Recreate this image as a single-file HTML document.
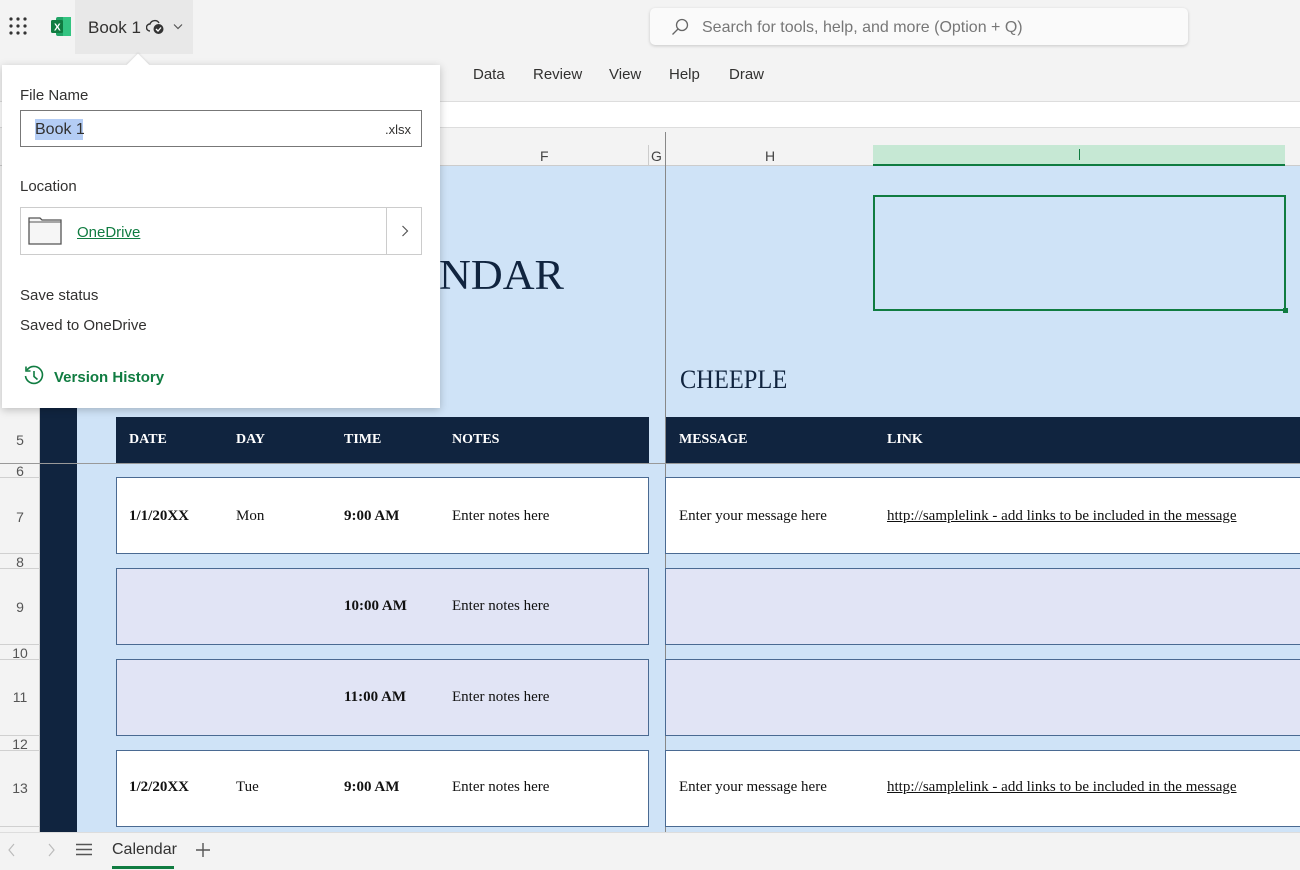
<!DOCTYPE html>
<html><head><meta charset="utf-8"><style>
*{margin:0;padding:0;box-sizing:border-box}
body{width:1300px;height:870px;overflow:hidden;position:relative;background:#cfe3f7;font-family:"Liberation Sans",sans-serif}
.a{position:absolute}
.ui{font-family:"Liberation Sans",sans-serif;color:#323130}
.sr{font-family:"Liberation Serif",serif;color:#111}
.hd{background:#10243f;color:#fff;font-family:"Liberation Serif",serif;font-weight:bold;font-size:14px}
.box{border:1px solid #4a6a92;background:#fff}
.lav{background:#e1e4f5}
.rn{font-size:14px;color:#555;width:40px;text-align:center;left:0}
.rl{left:0;width:40px;height:1px;background:#d0d0d0}
.ct{font-family:"Liberation Serif",serif;font-size:15px;color:#111}
</style></head><body>
<div class="a" style="left:0;top:0;width:1300px;height:101px;background:#f3f3f3"></div>
<div class="a" style="left:0;top:101px;width:1300px;height:27px;background:#fff;border-top:1px solid #ddd;border-bottom:1px solid #ddd"></div>
<div class="a" style="left:0;top:128px;width:1300px;height:38px;background:#f3f3f3;border-bottom:1px solid #ccc"></div>
<svg class="a" style="left:9px;top:17px" width="20" height="20"><g fill="#333"><circle cx="2" cy="2" r="1.6"/><circle cx="9" cy="2" r="1.6"/><circle cx="16" cy="2" r="1.6"/><circle cx="2" cy="9" r="1.6"/><circle cx="9" cy="9" r="1.6"/><circle cx="16" cy="9" r="1.6"/><circle cx="2" cy="16" r="1.6"/><circle cx="9" cy="16" r="1.6"/><circle cx="16" cy="16" r="1.6"/></g></svg>
<svg class="a" style="left:51px;top:17px" width="20" height="19"><rect x="5" y="0" width="15" height="19" rx="2" fill="#21a366"/><rect x="12" y="0" width="8" height="19" fill="#33c481"/><rect x="0" y="3" width="12" height="13" rx="1.5" fill="#107c41"/><text x="3" y="13.5" font-size="10" fill="#fff" font-family="Liberation Sans" font-weight="bold">X</text></svg>
<div class="a" style="left:75px;top:0;width:118px;height:54px;background:#e8e8e8"></div>
<div class="a ui" style="left:88px;top:18px;font-size:17px">Book 1</div>
<svg class="a" style="left:146px;top:18px" width="20" height="18"><path d="M4 13a3.5 3.5 0 0 1 0-7 5 5 0 0 1 9-1" fill="none" stroke="#333" stroke-width="1.4"/><circle cx="12.5" cy="11" r="5" fill="#333"/><path d="M10 11l2 2 3-3.5" stroke="#fff" stroke-width="1.3" fill="none"/></svg>
<svg class="a" style="left:173px;top:23px" width="10" height="8"><path d="M1 1.5l4 4 4-4" fill="none" stroke="#555" stroke-width="1.2"/></svg>
<div class="a" style="left:650px;top:8px;width:538px;height:37px;background:#fafafa;border-radius:5px;box-shadow:0 1px 3px rgba(0,0,0,.18)"></div>
<svg class="a" style="left:671px;top:18px" width="18" height="18"><circle cx="11" cy="7" r="5.5" fill="none" stroke="#666" stroke-width="1.3"/><path d="M7 11l-5.5 5.5" stroke="#666" stroke-width="1.3"/></svg>
<div class="a ui" style="left:702px;top:19px;font-size:16px;color:#777">Search for tools, help, and more (Option + Q)</div>
<div class="a ui" style="left:473px;top:66px;font-size:15px">Data</div>
<div class="a ui" style="left:533px;top:66px;font-size:15px">Review</div>
<div class="a ui" style="left:609px;top:66px;font-size:15px">View</div>
<div class="a ui" style="left:669px;top:66px;font-size:15px">Help</div>
<div class="a ui" style="left:729px;top:66px;font-size:15px">Draw</div>
<div class="a ui" style="left:540px;top:148px;font-size:14px;color:#444">F</div>
<div class="a" style="left:648px;top:145px;width:1px;height:21px;background:#ccc"></div>
<div class="a ui" style="left:651px;top:148px;font-size:14px;color:#444">G</div>
<div class="a" style="left:665px;top:132px;width:1px;height:700px;background:#888"></div>
<div class="a ui" style="left:765px;top:148px;font-size:14px;color:#444">H</div>
<div class="a" style="left:873px;top:145px;width:412px;height:21px;background:#c6e8d4;border-bottom:2px solid #107c41"></div>
<div class="a" style="left:1079px;top:149px;width:1px;height:11px;background:#107c41"></div>
<div class="a" style="left:0;top:166px;width:40px;height:666px;background:#f3f3f3;border-right:1px solid #ccc"></div>
<div class="a" style="left:40px;top:166px;width:37px;height:666px;background:#10243f"></div>
<div class="a rl" style="top:477px"></div>
<div class="a rl" style="top:553px"></div>
<div class="a rl" style="top:568px"></div>
<div class="a rl" style="top:644px"></div>
<div class="a rl" style="top:659px"></div>
<div class="a rl" style="top:735px"></div>
<div class="a rl" style="top:750px"></div>
<div class="a rl" style="top:826px"></div>
<div class="a rn" style="top:432px">5</div>
<div class="a rn" style="top:463px">6</div>
<div class="a rn" style="top:509px">7</div>
<div class="a rn" style="top:554px">8</div>
<div class="a rn" style="top:599px">9</div>
<div class="a rn" style="top:645px">10</div>
<div class="a rn" style="top:689px">11</div>
<div class="a rn" style="top:736px">12</div>
<div class="a rn" style="top:780px">13</div>
<div class="a" style="left:0;top:463px;width:1300px;height:1px;background:#999"></div>
<div class="a sr" style="left:439px;top:252px;font-size:42px;color:#10243f;transform:scaleX(1.05);transform-origin:left">NDAR</div>
<div class="a sr" style="left:680px;top:365px;font-size:26px;color:#10243f;transform:scaleX(.94);transform-origin:left">CHEEPLE</div>
<div class="a" style="left:873px;top:195px;width:413px;height:116px;border:2px solid #107c41"></div>
<div class="a" style="left:1283px;top:308px;width:5px;height:5px;background:#107c41"></div>
<div class="a hd" style="left:116px;top:417px;width:533px;height:46px"></div>
<div class="a hd" style="left:666px;top:417px;width:634px;height:46px"></div>
<div class="a hd" style="left:129px;top:432px;background:none">DATE</div>
<div class="a hd" style="left:236px;top:432px;background:none">DAY</div>
<div class="a hd" style="left:344px;top:432px;background:none">TIME</div>
<div class="a hd" style="left:452px;top:432px;background:none">NOTES</div>
<div class="a hd" style="left:679px;top:432px;background:none">MESSAGE</div>
<div class="a hd" style="left:887px;top:432px;background:none">LINK</div>
<div class="a box" style="left:116px;top:477px;width:533px;height:77px"></div>
<div class="a box" style="left:665px;top:477px;width:640px;height:77px"></div>
<div class="a box lav" style="left:116px;top:568px;width:533px;height:77px"></div>
<div class="a box lav" style="left:665px;top:568px;width:640px;height:77px"></div>
<div class="a box lav" style="left:116px;top:659px;width:533px;height:77px"></div>
<div class="a box lav" style="left:665px;top:659px;width:640px;height:77px"></div>
<div class="a box" style="left:116px;top:750px;width:533px;height:77px"></div>
<div class="a box" style="left:665px;top:750px;width:640px;height:77px"></div>
<div class="a ct" style="left:129px;top:508px;font-weight:bold">1/1/20XX</div>
<div class="a ct" style="left:236px;top:508px">Mon</div>
<div class="a ct" style="left:344px;top:508px;font-weight:bold">9:00 AM</div>
<div class="a ct" style="left:452px;top:508px">Enter notes here</div>
<div class="a ct" style="left:679px;top:508px">Enter your message here</div>
<div class="a ct" style="left:887px;top:508px;text-decoration:underline">http://samplelink - add links to be included in the message</div>
<div class="a ct" style="left:344px;top:598px;font-weight:bold">10:00 AM</div>
<div class="a ct" style="left:452px;top:598px">Enter notes here</div>
<div class="a ct" style="left:344px;top:689px;font-weight:bold">11:00 AM</div>
<div class="a ct" style="left:452px;top:689px">Enter notes here</div>
<div class="a ct" style="left:129px;top:779px;font-weight:bold">1/2/20XX</div>
<div class="a ct" style="left:236px;top:779px">Tue</div>
<div class="a ct" style="left:344px;top:779px;font-weight:bold">9:00 AM</div>
<div class="a ct" style="left:452px;top:779px">Enter notes here</div>
<div class="a ct" style="left:679px;top:779px">Enter your message here</div>
<div class="a ct" style="left:887px;top:779px;text-decoration:underline">http://samplelink - add links to be included in the message</div>
<div class="a" style="left:0;top:832px;width:1300px;height:38px;background:#f3f3f3;border-top:1px solid #ddd"></div>
<svg class="a" style="left:5px;top:842px" width="60" height="16"><path d="M9 2l-5 6 5 6" fill="none" stroke="#bbb" stroke-width="1.2"/><path d="M44 2l5 6-5 6" fill="none" stroke="#bbb" stroke-width="1.2"/></svg>
<svg class="a" style="left:76px;top:843px" width="16" height="13"><path d="M0 1.5h16M0 6.5h16M0 11.5h16" stroke="#555" stroke-width="1.5"/></svg>
<div class="a ui" style="left:112px;top:841px;font-size:16px;color:#333">Calendar</div>
<div class="a" style="left:112px;top:866px;width:62px;height:3px;background:#107c41"></div>
<svg class="a" style="left:195px;top:842px" width="16" height="16"><path d="M8 1v14M1 8h14" stroke="#555" stroke-width="1.4"/></svg>
<div class="a" style="left:2px;top:65px;width:438px;height:343px;background:#fff;box-shadow:0 2px 8px rgba(0,0,0,.22)"></div>
<div class="a" style="left:130px;top:57px;width:16px;height:16px;background:#fff;transform:rotate(45deg);box-shadow:-1px -1px 2px rgba(0,0,0,.08)"></div>
<div class="a" style="left:120px;top:65px;width:40px;height:12px;background:#fff"></div>
<div class="a ui" style="left:20px;top:87px;font-size:15px">File Name</div>
<div class="a" style="left:20px;top:110px;width:402px;height:37px;border:1px solid #777;background:#fff"></div>
<div class="a" style="left:35px;top:119px;width:48px;height:21px;background:#b4cdf5"></div>
<div class="a ui" style="left:35px;top:121px;font-size:16px">Book 1</div>
<div class="a ui" style="left:385px;top:122px;font-size:13px">.xlsx</div>
<div class="a ui" style="left:20px;top:178px;font-size:15px">Location</div>
<div class="a" style="left:20px;top:207px;width:402px;height:48px;border:1px solid #ccc"></div>
<div class="a" style="left:386px;top:207px;width:1px;height:48px;background:#ccc"></div>
<svg class="a" style="left:28px;top:217px" width="34" height="28"><path d="M1 1h11l2 2h19v24H1z" fill="#f6f6f6" stroke="#555" stroke-width="1.3"/><path d="M1 5h32" stroke="#555" stroke-width="1"/></svg>
<div class="a ui" style="left:77px;top:224px;font-size:15px;color:#107c41;text-decoration:underline">OneDrive</div>
<svg class="a" style="left:401px;top:225px" width="8" height="12"><path d="M1.5 1l5 5-5 5" fill="none" stroke="#555" stroke-width="1.2"/></svg>
<div class="a ui" style="left:20px;top:287px;font-size:15px">Save status</div>
<div class="a ui" style="left:20px;top:317px;font-size:15px">Saved to OneDrive</div>
<svg class="a" style="left:23px;top:365px" width="22" height="22"><path d="M4 5A8.5 8.5 0 1 1 2.5 11" fill="none" stroke="#107c41" stroke-width="1.6"/><path d="M3 1.5V6h4.5" fill="none" stroke="#107c41" stroke-width="1.6"/><path d="M11 6v5.5l3.5 3" fill="none" stroke="#107c41" stroke-width="1.6"/></svg>
<div class="a ui" style="left:54px;top:369px;font-size:15px;font-weight:bold;color:#107c41">Version History</div>
</body></html>
